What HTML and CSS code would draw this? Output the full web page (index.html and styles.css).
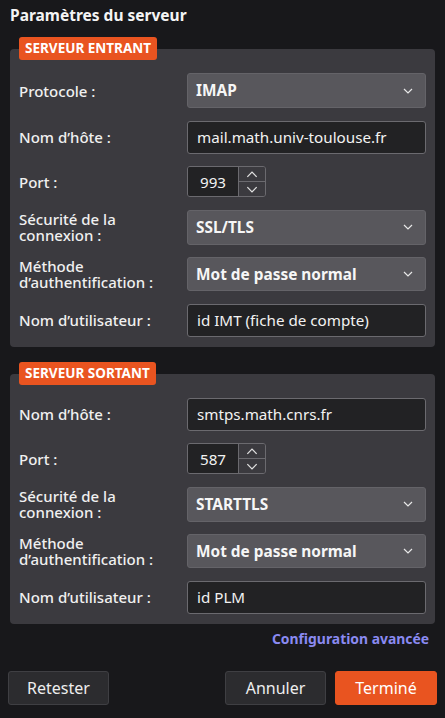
FILE: index.html
```html
<!DOCTYPE html>
<html lang="fr">
<head>
<meta charset="utf-8">
<title>Paramètres du serveur</title>
<link rel="stylesheet" href="styles.css">
</head>
<body>
<h1 class="title">Paramètres du serveur</h1>

<section class="group">
  <div class="badge">SERVEUR ENTRANT</div>
  <div class="panel">
    <div class="row row-select">
      <span class="label">Protocole :</span>
      <div class="select"><span>IMAP</span><svg class="chev" viewBox="0 0 10 6"><path d="M1 1 L5 5 L9 1"/></svg></div>
    </div>
    <div class="row row-input">
      <span class="label">Nom d’hôte :</span>
      <div class="input">mail.math.univ-toulouse.fr</div>
    </div>
    <div class="row row-port">
      <span class="label">Port :</span>
      <div class="port"><span class="num">993</span><span class="spin"><span class="up"><svg viewBox="0 0 10 6"><path d="M1 5 L5 1 L9 5"/></svg></span><span class="down"><svg viewBox="0 0 10 6"><path d="M1 1 L5 5 L9 1"/></svg></span></span></div>
    </div>
    <div class="row row-select">
      <span class="label">Sécurité de la<br>connexion :</span>
      <div class="select"><span>SSL/TLS</span><svg class="chev" viewBox="0 0 10 6"><path d="M1 1 L5 5 L9 1"/></svg></div>
    </div>
    <div class="row row-select2">
      <span class="label">Méthode<br>d’authentification :</span>
      <div class="select"><span>Mot de passe normal</span><svg class="chev" viewBox="0 0 10 6"><path d="M1 1 L5 5 L9 1"/></svg></div>
    </div>
    <div class="row row-input">
      <span class="label">Nom d’utilisateur :</span>
      <div class="input">id IMT (fiche de compte)</div>
    </div>
  </div>
</section>

<section class="group group2">
  <div class="badge">SERVEUR SORTANT</div>
  <div class="panel">
    <div class="row row-input">
      <span class="label">Nom d’hôte :</span>
      <div class="input">smtps.math.cnrs.fr</div>
    </div>
    <div class="row row-port">
      <span class="label">Port :</span>
      <div class="port"><span class="num">587</span><span class="spin"><span class="up"><svg viewBox="0 0 10 6"><path d="M1 5 L5 1 L9 5"/></svg></span><span class="down"><svg viewBox="0 0 10 6"><path d="M1 1 L5 5 L9 1"/></svg></span></span></div>
    </div>
    <div class="row row-select">
      <span class="label">Sécurité de la<br>connexion :</span>
      <div class="select"><span>STARTTLS</span><svg class="chev" viewBox="0 0 10 6"><path d="M1 1 L5 5 L9 1"/></svg></div>
    </div>
    <div class="row row-select2">
      <span class="label">Méthode<br>d’authentification :</span>
      <div class="select"><span>Mot de passe normal</span><svg class="chev" viewBox="0 0 10 6"><path d="M1 1 L5 5 L9 1"/></svg></div>
    </div>
    <div class="row row-input">
      <span class="label">Nom d’utilisateur :</span>
      <div class="input">id PLM</div>
    </div>
  </div>
</section>

<div class="advanced"><a class="link">Configuration avancée</a></div>

<div class="buttons">
  <button class="btn">Retester</button>
  <div class="spacer"></div>
  <button class="btn">Annuler</button>
  <button class="btn primary">Terminé</button>
</div>
</body>
</html>
```

FILE: styles.css
```css
* { box-sizing: border-box; }
html, body { margin: 0; padding: 0; }
body {
  width: 445px;
  height: 718px;
  background: #18181b;
  color: #f2f2f2;
  font-family: "Noto Sans", "Open Sans", "DejaVu Sans", sans-serif;
  padding: 0 8px;
  overflow: hidden;
}
.title {
  margin: 0;
  padding: 4px 0 0 2px;
  height: 37px;
  font-size: 15.5px;
  font-weight: 700;
  line-height: 22px;
  color: #f4f4f4;
}
.group { margin: 0 2px; }
.group2 { margin-top: 15px; }
.badge {
  position: relative;
  z-index: 1;
  display: block;
  width: fit-content;
  margin-left: 9px;
  margin-bottom: -11px;
  height: 23px;
  padding: 0 6px;
  background: #e95420;
  color: #fff;
  border-radius: 3px;
  font-size: 13.5px;
  font-weight: 700;
  line-height: 23px;
}
.panel {
  background: #3b3a3f;
  border-radius: 4px;
  padding: 24px 9px 10px 9px;
  display: flex;
  flex-direction: column;
  gap: 12.5px;
}
.row {
  display: grid;
  grid-template-columns: 168px 239px;
  align-items: center;
}
.label {
  font-size: 15px;
  font-weight: 500;
  line-height: 16px;
  color: #f0f0f0;
}
.select {
  height: 35px;
  background: #58575c;
  border: 1px solid #646368;
  border-radius: 3px;
  display: flex;
  align-items: center;
  justify-content: space-between;
  padding: 0 12px 0 8px;
  font-size: 15.4px;
  font-weight: 700;
  color: #f6f6f6;
}
.row-select2 .select { height: 34px; }
.chev {
  width: 10px;
  height: 6px;
  fill: none;
  stroke: #e8e8e8;
  stroke-width: 1.2;
}
.input {
  height: 33px;
  background: #222224;
  border: 1px solid #6b6a6f;
  border-radius: 3px;
  padding: 0 9px;
  display: flex;
  align-items: center;
  font-size: 15.2px;
  color: #f2f2f2;
}
.port {
  width: 79px;
  height: 31px;
  display: flex;
  border: 1px solid #6b6a6f;
  border-radius: 3px;
  overflow: hidden;
}
.num {
  width: 50px;
  background: #222224;
  display: flex;
  align-items: center;
  justify-content: center;
  font-size: 15.2px;
  color: #f2f2f2;
}
.spin {
  flex: 1;
  display: flex;
  flex-direction: column;
  border-left: 1px solid #6b6a6f;
  background: #3b3a3f;
}
.spin .up, .spin .down {
  flex: 1;
  display: flex;
  align-items: center;
  justify-content: center;
}
.spin .up { border-bottom: 1px solid #6b6a6f; }
.spin svg {
  width: 12px;
  height: 7px;
  fill: none;
  stroke: #e0e0e0;
  stroke-width: 1.1;
}
.advanced {
  display: flex;
  justify-content: flex-end;
  padding: 5px 8px 0 0;
  height: 47px;
}
.link {
  font-size: 13.9px;
  font-weight: 700;
  color: #8a8af2;
  line-height: 20px;
}
.buttons {
  display: flex;
  gap: 9px;
}
.spacer { flex: 1; }
.btn {
  width: 101px;
  height: 34px;
  border-radius: 3px;
  border: 1px solid #3f3f43;
  background: #2c2c2f;
  color: #eeeeee;
  font-family: "Noto Sans", "Open Sans", sans-serif;
  font-size: 16px;
}
.btn.primary {
  width: 102px;
  background: #e95420;
  border-color: #e95420;
  color: #fff;
}
```
